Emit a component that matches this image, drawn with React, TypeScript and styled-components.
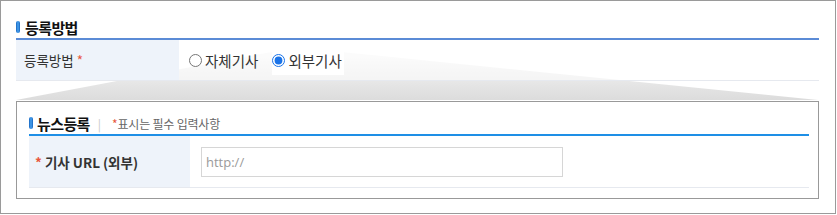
import React from 'react';
import styled, { createGlobalStyle } from 'styled-components';

const GlobalStyle = createGlobalStyle`
  html, body {
    margin: 0;
    padding: 0;
    background: #fff;
  }
  body {
    font-family: 'Noto Sans CJK KR', 'Noto Sans', sans-serif;
    color: #333;
  }
`;

const Page = styled.div`
  position: relative;
  box-sizing: border-box;
  width: 836px;
  height: 214px;
  border: 1px solid #9a9a9a;
  padding: 15px 16px 0 15px;
`;

// callout wedge drawn from the selected option down to the detail box
const Wedge = styled.svg`
  position: absolute;
  top: -1px;
  left: -1px;
  z-index: 0;
  pointer-events: none;
`;

const Layer = styled.div`
  position: relative;
  z-index: 1;
`;

const SectionHead = styled.div<{ $line: string }>`
  display: flex;
  align-items: center;
  height: 22px;
  border-bottom: 2px solid ${(p) => p.$line};
`;

const Pill = styled.span<{ $gap: number }>`
  display: inline-block;
  width: 4px;
  height: 12px;
  border-radius: 2px;
  background: linear-gradient(90deg, #1565c0 0%, #4aa3f0 50%, #1565c0 100%);
  margin-right: ${(p) => p.$gap}px;
`;

const HeadTitle = styled.span`
  font-size: 15px;
  font-weight: 700;
  color: #111;
  letter-spacing: -0.6px;
`;

const Divider = styled.span`
  color: #c8c8c8;
  font-size: 12px;
  margin: 0 11px 0 8px;
`;

const Note = styled.span`
  font-size: 12px;
  color: #666;
  letter-spacing: -0.2px;
`;

const Star = styled.span`
  color: #e8573a;
`;

const Row = styled.div<{ $height: number }>`
  display: flex;
  height: ${(p) => p.$height}px;
  border-bottom: 1px solid #e6e9ef;
`;

const LabelCell = styled.div<{ $width: number; $bold?: boolean; $pad: number }>`
  display: flex;
  align-items: center;
  width: ${(p) => p.$width}px;
  flex: none;
  box-sizing: border-box;
  padding-left: ${(p) => p.$pad}px;
  background: #eef3fa;
  font-size: 13.5px;
  font-weight: ${(p) => (p.$bold ? 600 : 400)};
  color: #333;
  white-space: pre;
`;

const ValueCell = styled.div<{ $pad: number; $soft?: boolean }>`
  flex: 1;
  display: flex;
  align-items: center;
  padding-left: ${(p) => p.$pad}px;
  background: ${(p) => (p.$soft ? 'rgba(255,255,255,0.55)' : '#fff')};
`;

const RadioLabel = styled.label<{ $active?: boolean }>`
  display: flex;
  align-items: center;
  gap: 3px;
  height: 30px;
  font-size: 14.5px;
  color: #333;
  margin-right: ${(p) => (p.$active ? 0 : 12)}px;
  padding-right: 2px;
  background: ${(p) => (p.$active ? '#fff' : 'transparent')};

  input {
    width: 13px;
    height: 13px;
    margin: 0;
    accent-color: #1a73e8;
  }
`;

const Spacer = styled.div`
  height: 20px;
`;

const InnerBox = styled.div`
  box-sizing: border-box;
  height: 98px;
  border: 1px solid #999;
  background: #fff;
  padding: 10px 9px 0 12px;
`;

const UrlInput = styled.input`
  box-sizing: border-box;
  width: 362px;
  height: 30px;
  border: 1px solid #d6d6d6;
  padding: 0 4px;
  font-family: 'Open Sans', 'Noto Sans', sans-serif;
  font-size: 13px;
  outline: none;

  &::placeholder {
    color: #9a9a9a;
  }
`;

export default function App() {
  return (
    <>
      <GlobalStyle />
      <Page>
        <Wedge width={836} height={214}>
          <defs>
            <linearGradient id="wedgeFill" x1="0" y1="0" x2="0" y2="1">
              <stop offset="0%" stopColor="#f8f8f8" />
              <stop offset="100%" stopColor="#dcdcdc" />
            </linearGradient>
          </defs>
          <polygon points="271,52 342,52 818,100 16,100" fill="url(#wedgeFill)" />
        </Wedge>
        <Layer>
          <SectionHead $line="#5b8bd6">
            <Pill $gap={5} />
            <HeadTitle>등록방법</HeadTitle>
          </SectionHead>
          <Row $height={40}>
            <LabelCell $width={163} $pad={8}>
              등록방법 <Star>*</Star>
            </LabelCell>
            <ValueCell $pad={10} $soft>
              <RadioLabel>
                <input type="radio" name="reg" />
                자체기사
              </RadioLabel>
              <RadioLabel $active>
                <input type="radio" name="reg" defaultChecked />
                외부기사
              </RadioLabel>
            </ValueCell>
          </Row>
          <Spacer />
          <InnerBox>
            <SectionHead $line="#1e8fe6">
              <Pill $gap={4} />
              <HeadTitle>뉴스등록</HeadTitle>
              <Divider>|</Divider>
              <Note>
                <Star>*</Star>표시는 필수 입력사항
              </Note>
            </SectionHead>
            <Row $height={51}>
              <LabelCell $width={161} $pad={6} $bold>
                <Star>*</Star> 기사 URL (외부)
              </LabelCell>
              <ValueCell $pad={11}>
                <UrlInput placeholder="http://" />
              </ValueCell>
            </Row>
          </InnerBox>
        </Layer>
      </Page>
    </>
  );
}
